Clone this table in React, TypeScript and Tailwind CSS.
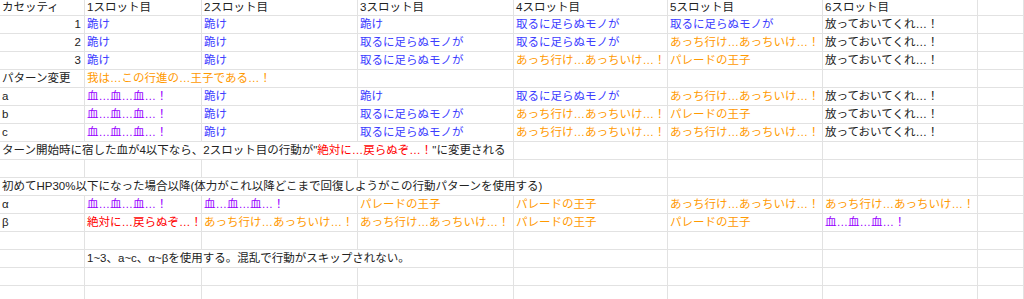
import * as React from "react";

type Cell = {
  t?: React.ReactNode;
  c?: "b" | "o" | "p" | "r";
  span?: number;
  right?: boolean;
};

const colors = {
  b: "text-[#3c3cff]",
  o: "text-[#ff9900]",
  p: "text-[#9900ff]",
  r: "text-[#ff0000]",
};

const spans: Record<number, string> = {
  1: "",
  2: "col-span-2",
  3: "col-span-3",
  4: "col-span-4",
  5: "col-span-5",
};

const KIZ = "跪け";
const TORU = "取るに足らぬモノが";
const ACCHI = "あっち行け…あっちいけ…！";
const PARADE = "パレードの王子";
const HOTTE = "放っておいてくれ…！";
const CHI = "血…血…血…！";
const ZETTAI = "絶対に…戻らぬぞ…！";

const empty = (n: number): Cell[] => Array.from({ length: n }, () => ({}));

const rows: Cell[][] = [
  [
    { t: "カセッティ" },
    { t: "1スロット目" },
    { t: "2スロット目" },
    { t: "3スロット目" },
    { t: "4スロット目" },
    { t: "5スロット目" },
    { t: "6スロット目" },
    {},
  ],
  [
    { t: "1", right: true },
    { t: KIZ, c: "b" },
    { t: KIZ, c: "b" },
    { t: KIZ, c: "b" },
    { t: TORU, c: "b" },
    { t: TORU, c: "b" },
    { t: HOTTE },
    {},
  ],
  [
    { t: "2", right: true },
    { t: KIZ, c: "b" },
    { t: KIZ, c: "b" },
    { t: TORU, c: "b" },
    { t: TORU, c: "b" },
    { t: ACCHI, c: "o" },
    { t: HOTTE },
    {},
  ],
  [
    { t: "3", right: true },
    { t: KIZ, c: "b" },
    { t: KIZ, c: "b" },
    { t: TORU, c: "b" },
    { t: ACCHI, c: "o" },
    { t: PARADE, c: "o" },
    { t: HOTTE },
    {},
  ],
  [{ t: "パターン変更" }, { t: "我は…この行進の…王子である…！", c: "o", span: 2 }, ...empty(5)],
  [
    { t: "a" },
    { t: CHI, c: "p" },
    { t: KIZ, c: "b" },
    { t: KIZ, c: "b" },
    { t: TORU, c: "b" },
    { t: ACCHI, c: "o" },
    { t: HOTTE },
    {},
  ],
  [
    { t: "b" },
    { t: CHI, c: "p" },
    { t: KIZ, c: "b" },
    { t: TORU, c: "b" },
    { t: ACCHI, c: "o" },
    { t: PARADE, c: "o" },
    { t: HOTTE },
    {},
  ],
  [
    { t: "c" },
    { t: CHI, c: "p" },
    { t: KIZ, c: "b" },
    { t: TORU, c: "b" },
    { t: ACCHI, c: "o" },
    { t: ACCHI, c: "o" },
    { t: HOTTE },
    {},
  ],
  [
    {
      t: (
        <>
          ターン開始時に宿した血が4以下なら、2スロット目の行動が"
          <span className="text-[#ff0000]">{ZETTAI}</span>"に変更される
        </>
      ),
      span: 4,
    },
    ...empty(4),
  ],
  empty(8),
  [
    {
      t: "初めてHP30%以下になった場合以降(体力がこれ以降どこまで回復しようがこの行動パターンを使用する)",
      span: 5,
    },
    ...empty(3),
  ],
  [
    { t: "α" },
    { t: CHI, c: "p" },
    { t: CHI, c: "p" },
    { t: PARADE, c: "o" },
    { t: PARADE, c: "o" },
    { t: ACCHI, c: "o" },
    { t: ACCHI, c: "o" },
    {},
  ],
  [
    { t: "β" },
    { t: ZETTAI, c: "r" },
    { t: ACCHI, c: "o" },
    { t: ACCHI, c: "o" },
    { t: PARADE, c: "o" },
    { t: PARADE, c: "o" },
    { t: CHI, c: "p" },
    {},
  ],
  empty(8),
  [{}, { t: "1~3、a~c、α~βを使用する。混乱で行動がスキップされない。", span: 3 }, ...empty(4)],
  empty(8),
  empty(8),
];

export default function App() {
  return (
    <div
      className="w-[1024px] h-[299px] overflow-hidden bg-white text-[11.5px] text-[#222222]"
      style={{ fontFamily: '"Liberation Sans", "Noto Sans CJK JP", sans-serif' }}
    >
      <div className="grid grid-cols-[85px_117px_156px_156px_154px_155px_155px_1fr]">
        {rows.map((row, ri) =>
          row.map((cell, ci) => (
            <div
              key={`${ri}-${ci}`}
              className={`${spans[cell.span ?? 1]} ${ri === 0 ? "h-[16px] leading-[15px]" : "h-[18px] leading-[17px]"} border-r border-b border-[#e2e2e2] whitespace-nowrap overflow-visible ${cell.right ? "text-right pr-[3px]" : "pl-[2px]"} ${cell.c ? colors[cell.c] : ""}`}
            >
              {cell.t}
            </div>
          ))
        )}
      </div>
    </div>
  );
}
